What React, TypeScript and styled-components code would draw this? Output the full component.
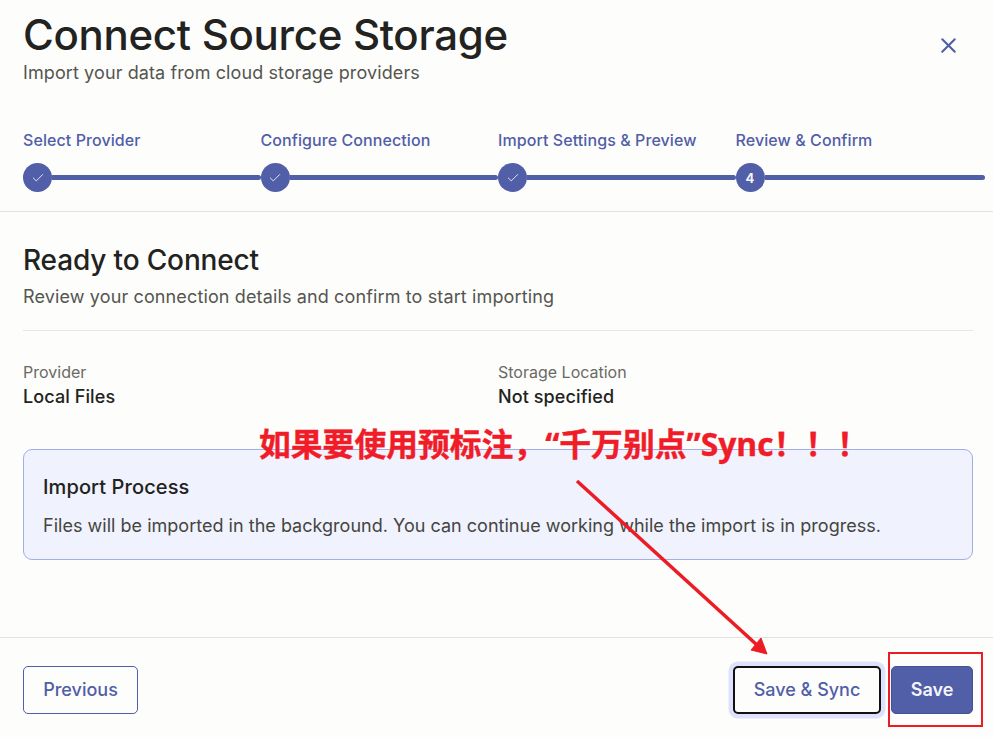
import styled, { createGlobalStyle } from 'styled-components'
import { Check, X } from 'lucide-react'

const accent = '#515ea8'

const GlobalStyle = createGlobalStyle`
	html, body {
		margin: 0;
		height: 100%;
		background: #fdfdfc;
		font-family: Inter, "Noto Sans", sans-serif;
	}
	#root {
		height: 100%;
	}
`

const Page = styled.div`
	position: relative;
	width: 993px;
	height: 737px;
	overflow: hidden;
	display: flex;
	flex-direction: column;
	background: #fdfdfc;
`

const Header = styled.header`
	height: 212px;
	box-sizing: border-box;
	border-bottom: 1px solid #e2e2e0;
	padding: 11px 8px 0 23px;
	position: relative;
`

const Title = styled.h1`
	margin: 0;
	font-size: 42px;
	line-height: 48px;
	font-weight: 500;
	letter-spacing: -0.3px;
	color: #222220;
`

const Subtitle = styled.p`
	margin: 1px 0 0;
	font-size: 18px;
	line-height: 26px;
	letter-spacing: 0.1px;
	color: #55554f;
`

const CloseButton = styled.button`
	position: absolute;
	top: 32px;
	right: 32px;
	width: 26px;
	height: 26px;
	padding: 0;
	border: 0;
	background: none;
	color: ${accent};
	display: flex;
	align-items: center;
	justify-content: center;
`

const Stepper = styled.div`
	display: grid;
	grid-template-columns: repeat(3, 237.5px) 1fr;
	margin-top: 43px;
`

const Step = styled.div`
	display: flex;
	flex-direction: column;
	gap: 12px;
`

const StepLabel = styled.span`
	font-size: 16px;
	line-height: 22px;
	font-weight: 500;
	letter-spacing: 0.08px;
	color: ${accent};
	white-space: nowrap;
`

const Track = styled.div`
	display: flex;
	align-items: center;
`

const Dot = styled.span`
	flex: none;
	width: 29px;
	height: 29px;
	border-radius: 50%;
	background: ${accent};
	color: #f4f4fb;
	display: flex;
	align-items: center;
	justify-content: center;
	font-size: 13px;
	font-weight: 700;
`

const Bar = styled.span`
	flex: 1;
	height: 5px;
	background: ${accent};
	border-radius: 0 3px 3px 0;
`

const Body = styled.main`
	flex: 1;
	padding: 0 20px 0 23px;
`

const SectionTitle = styled.h2`
	margin: 30px 0 0;
	font-size: 28px;
	line-height: 36px;
	font-weight: 500;
	letter-spacing: -0.15px;
	color: #222220;
`

const SectionHint = styled.p`
	margin: 6px 0 0;
	padding-bottom: 20px;
	font-size: 18px;
	line-height: 26px;
	letter-spacing: 0.13px;
	color: #55554f;
	border-bottom: 1px solid #e6e6e3;
`

const Details = styled.dl`
	display: grid;
	grid-template-columns: 475px 1fr;
	margin: 29px 0 0;
`

const Detail = styled.div`
	display: flex;
	flex-direction: column;
	gap: 1px;
`

const DetailLabel = styled.dt`
	font-size: 16px;
	line-height: 24px;
	color: #6a6a64;
`

const DetailValue = styled.dd`
	margin: 0;
	font-size: 18px;
	line-height: 24px;
	font-weight: 500;
	letter-spacing: 0.1px;
	color: #222220;
`

const InfoBox = styled.section`
	height: 111px;
	box-sizing: border-box;
	margin-top: 40px;
	padding: 23px 19px 0;
	background: #f0f2fe;
	border: 1px solid #a3ade8;
	border-radius: 9px;
`

const InfoTitle = styled.h3`
	margin: 0;
	font-size: 20px;
	line-height: 28px;
	font-weight: 500;
	letter-spacing: 0.1px;
	color: #222220;
`

const InfoText = styled.p`
	margin: 12px 0 0;
	font-size: 18px;
	line-height: 26px;
	letter-spacing: 0.02px;
	color: #45453f;
	white-space: nowrap;
`

const Footer = styled.footer`
	height: 100px;
	box-sizing: border-box;
	border-top: 1px solid #e2e2e0;
	padding: 28px 20px 0 23px;
	display: flex;
	align-items: flex-start;
	justify-content: space-between;
`

const Actions = styled.div`
	display: flex;
	gap: 10px;
`

const Button = styled.button<{ $variant?: 'primary' | 'focused' }>`
	height: 48px;
	box-sizing: border-box;
	border-radius: 5px;
	font-family: inherit;
	font-size: 18px;
	font-weight: ${({ $variant }) => ($variant === 'primary' ? 600 : 500)};
	padding: 0 0 2px;
	width: ${({ $variant }) => ($variant === 'primary' ? '82px' : $variant === 'focused' ? '148px' : '115px')};
	color: ${({ $variant }) => ($variant === 'primary' ? '#f4f4fb' : accent)};
	background: ${({ $variant }) => ($variant === 'primary' ? accent : '#fdfdfc')};
	border: ${({ $variant }) =>
		$variant === 'focused' ? '2px solid #111' : $variant === 'primary' ? '1px solid #47538f' : `1px solid ${accent}`};
	box-shadow: ${({ $variant }) => ($variant === 'focused' ? '0 0 0 4.5px #dde1fb' : 'none')};
`

const Note = styled.div`
	position: absolute;
	left: 259px;
	top: 423px;
	font-family: "Open Sans", "Noto Sans CJK SC", sans-serif;
	font-size: 31.8px;
	line-height: 42px;
	font-weight: 700;
	-webkit-text-stroke: 0.4px #f01c28;
	color: #f01c28;
	white-space: nowrap;
`

const ArrowLayer = styled.svg`
	position: absolute;
	left: 0;
	top: 0;
	pointer-events: none;
`

const Highlight = styled.div`
	position: absolute;
	left: 888px;
	top: 652px;
	width: 95px;
	height: 75px;
	box-sizing: border-box;
	border: 2px solid #ec1c24;
`

const steps = ['Select Provider', 'Configure Connection', 'Import Settings & Preview', 'Review & Confirm']

const App = () => {
	return (
		<Page>
			<GlobalStyle />
			<Header>
				<Title>Connect Source Storage</Title>
				<Subtitle>Import your data from cloud storage providers</Subtitle>
				<CloseButton aria-label="Close">
					<X size={25} strokeWidth={2} />
				</CloseButton>
				<Stepper>
					{steps.map((label, i) => (
						<Step key={label}>
							<StepLabel>{label}</StepLabel>
							<Track>
								<Dot>{i < 3 ? <Check size={14} strokeWidth={1.5} /> : '4'}</Dot>
								<Bar />
							</Track>
						</Step>
					))}
				</Stepper>
			</Header>
			<Body>
				<SectionTitle>Ready to Connect</SectionTitle>
				<SectionHint>Review your connection details and confirm to start importing</SectionHint>
				<Details>
					<Detail>
						<DetailLabel>Provider</DetailLabel>
						<DetailValue>Local Files</DetailValue>
					</Detail>
					<Detail>
						<DetailLabel>Storage Location</DetailLabel>
						<DetailValue>Not specified</DetailValue>
					</Detail>
				</Details>
				<InfoBox>
					<InfoTitle>Import Process</InfoTitle>
					<InfoText>Files will be imported in the background. You can continue working while the import is in progress.</InfoText>
				</InfoBox>
			</Body>
			<Footer>
				<Button>Previous</Button>
				<Actions>
					<Button $variant="focused">Save &amp; Sync</Button>
					<Button $variant="primary">Save</Button>
				</Actions>
			</Footer>
			<Note>如果要使用预标注，“千万别点”Sync！！！</Note>
			<ArrowLayer width="993" height="737" viewBox="0 0 993 737">
				<path d="M577 481 L757 645" stroke="#ec1c24" strokeWidth="3.5" fill="none" />
				<path d="M767 654 L751 650 L761 638 Z" fill="#ec1c24" stroke="#ec1c24" strokeWidth="1" />
			</ArrowLayer>
			<Highlight />
		</Page>
	)
}

export default App
